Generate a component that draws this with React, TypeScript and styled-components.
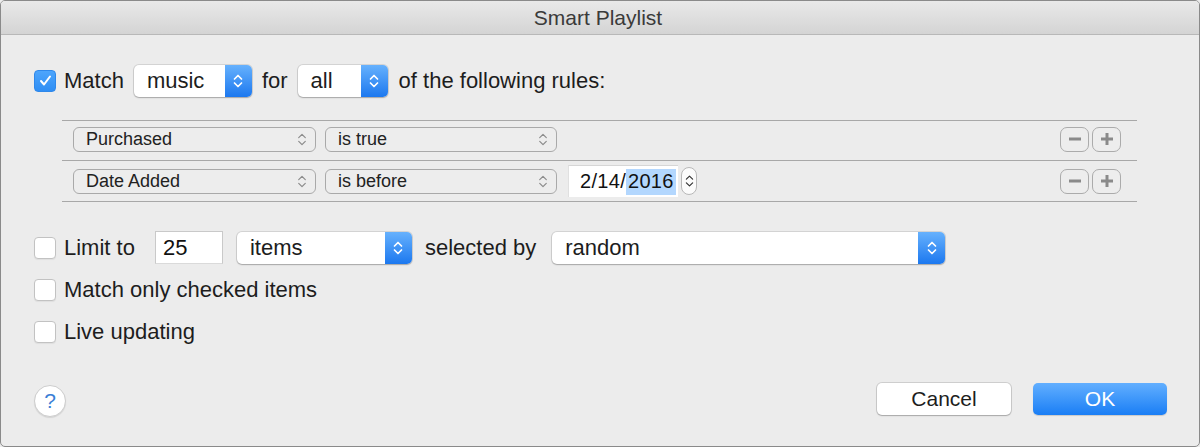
import React from "react";
import styled, { createGlobalStyle } from "styled-components";

const GlobalStyle = createGlobalStyle`
  html, body { margin: 0; padding: 0; background: #ececec; }
  body { font-family: "Liberation Sans", Arial, sans-serif; }
`;

const Window = styled.div`
  width: 1200px;
  height: 447px;
  box-sizing: border-box;
  border: 1px solid #8a8a8a;
  border-radius: 5px;
  background: #ececec;
  display: flex;
  flex-direction: column;
  overflow: hidden;
  color: #1d1d1d;
  font-family: "Liberation Sans", Arial, sans-serif;
`;

const TitleBar = styled.div`
  height: 34px;
  flex: none;
  box-sizing: border-box;
  display: flex;
  align-items: center;
  justify-content: center;
  background: linear-gradient(#e9e9e9, #d4d4d4);
  border-bottom: 1px solid #b8b8b8;
  font-size: 21px;
  color: #3a3a3a;
  padding-right: 4px;
`;

const Content = styled.div`
  flex: 1;
  display: flex;
  flex-direction: column;
  padding: 29px 32px 0 32px;
`;

const Row = styled.div<{ $gap?: number; $mt?: number }>`
  display: flex;
  align-items: center;
  height: 33px;
  gap: ${(p) => p.$gap ?? 10}px;
  margin-top: ${(p) => p.$mt ?? 0}px;
  font-size: 22px;
  white-space: nowrap;
`;

const CheckLabel = styled.label<{ $ml?: number }>`
  display: flex;
  align-items: center;
  gap: 8px;
  margin-left: ${(p) => p.$ml ?? 0}px;
`;

const Check = styled.span<{ $checked?: boolean }>`
  width: 22px;
  height: 22px;
  box-sizing: border-box;
  border-radius: 4px;
  flex: none;
  display: flex;
  align-items: center;
  justify-content: center;
  background: ${(p) => (p.$checked ? "linear-gradient(#4da5fc, #2f8ef4)" : "#fff")};
  border: 1px solid ${(p) => (p.$checked ? "#2f88ea" : "#c2c2c2")};
  box-shadow: ${(p) => (p.$checked ? "none" : "0 1px 1px rgba(0,0,0,0.06)")};
`;

const Text = styled.span<{ $ml?: number }>`
  margin-left: ${(p) => p.$ml ?? 0}px;
`;

const Popup = styled.div<{ $w: number; $ml?: number }>`
  width: ${(p) => p.$w}px;
  height: 32px;
  margin-left: ${(p) => p.$ml ?? 0}px;
  flex: none;
  box-sizing: border-box;
  display: flex;
  align-items: stretch;
  background: #fff;
  border-radius: 5px;
  box-shadow: 0 0 0 1px rgba(0, 0, 0, 0.1), 0 1px 1.5px rgba(0, 0, 0, 0.22);
  overflow: hidden;
  font-size: 22px;
`;

const PopupLabel = styled.span`
  flex: 1;
  display: flex;
  align-items: center;
  padding-left: 13px;
`;

const PopupArrow = styled.span`
  width: 27px;
  flex: none;
  background: linear-gradient(#66b1fd, #1c78ef);
  display: flex;
  align-items: center;
  justify-content: center;
`;

const RulesBox = styled.div`
  margin: 23px 0 0 29px;
  width: 1075px;
  border-top: 1px solid #a8a8a8;
`;

const RuleRow = styled.div<{ $h: number; $pb?: number }>`
  height: ${(p) => p.$h}px;
  box-sizing: border-box;
  display: flex;
  align-items: center;
  padding: 0 16px ${(p) => p.$pb ?? 0}px 11px;
  border-bottom: 1px solid #a8a8a8;
  font-size: 18px;
`;

const RulePopup = styled.div<{ $w: number; $ml?: number }>`
  width: ${(p) => p.$w}px;
  height: 25px;
  margin-left: ${(p) => p.$ml ?? 0}px;
  box-sizing: border-box;
  border: 1px solid #a9a9a9;
  border-radius: 6px;
  display: flex;
  align-items: center;
  justify-content: space-between;
  padding: 0 8px 0 12px;
  background: #ededed;
  color: #222;
`;

const DateField = styled.div`
  width: 110px;
  height: 32px;
  margin-left: 11px;
  box-sizing: border-box;
  background: #fff;
  border-top: 1px solid #d6d6d6;
  border-left: 1px solid #e0e0e0;
  display: flex;
  align-items: center;
  padding-left: 11px;
  font-size: 20px;
  color: #111;
  letter-spacing: 0.3px;
`;

const Selected = styled.span`
  background: #b3d7fe;
  padding: 1px 2px 2px 2px;
`;

const Stepper = styled.div`
  width: 16px;
  height: 28px;
  margin-left: 3px;
  box-sizing: border-box;
  border: 1px solid #b8b8b8;
  border-radius: 8px;
  background: #fbfbfb;
  display: flex;
  align-items: center;
  justify-content: center;
`;

const BtnGroup = styled.div`
  margin-left: auto;
  display: flex;
  gap: 3px;
`;

const SmallBtn = styled.div`
  width: 29px;
  height: 25px;
  box-sizing: border-box;
  border: 1.5px solid #ababab;
  border-radius: 7px;
  background: #ededed;
  display: flex;
  align-items: center;
  justify-content: center;
`;

const TextInput = styled.div`
  width: 68px;
  height: 33px;
  margin-left: 20px;
  box-sizing: border-box;
  background: #fff;
  border: 1px solid #c9c9c9;
  border-bottom-color: #dadada;
  display: flex;
  align-items: center;
  padding-left: 7px;
  font-size: 22px;
  color: #111;
`;

const Footer = styled.div`
  display: flex;
  align-items: flex-start;
  margin-top: 35px;
`;

const HelpBtn = styled.div`
  width: 32px;
  height: 32px;
  margin-left: 1px;
  margin-top: 2px;
  box-sizing: border-box;
  border-radius: 50%;
  background: #fff;
  border: 1px solid #cdcdcd;
  box-shadow: 0 1px 1px rgba(0, 0, 0, 0.1);
  display: flex;
  align-items: center;
  justify-content: center;
  color: #3b7fd6;
  font-size: 21px;
`;

const Button = styled.div<{ $primary?: boolean; $ml?: number }>`
  width: 134px;
  height: 32px;
  margin-left: ${(p) => p.$ml ?? 0}px;
  box-sizing: border-box;
  border-radius: 5px;
  display: flex;
  align-items: center;
  justify-content: center;
  font-size: 21px;
  color: ${(p) => (p.$primary ? "#fff" : "#1d1d1d")};
  background: ${(p) => (p.$primary ? "linear-gradient(#62afff, #1a7ef5)" : "#fff")};
  box-shadow: ${(p) =>
    p.$primary
      ? "0 1px 1px rgba(0,0,0,0.15)"
      : "0 0 0 1px rgba(0,0,0,0.12), 0 1px 1.5px rgba(0,0,0,0.2)"};
`;

const Spacer = styled.div`
  flex: 1;
`;

const UpDown = ({ color, w = 10, h = 16, sw = 1.7 }: { color: string; w?: number; h?: number; sw?: number }) => (
  <svg width={w} height={h} viewBox="0 0 10 16" fill="none" stroke={color} strokeWidth={sw} strokeLinecap="round" strokeLinejoin="round">
    <path d="M1.5 6 L5 2.5 L8.5 6" />
    <path d="M1.5 10 L5 13.5 L8.5 10" />
  </svg>
);

const CheckMark = () => (
  <svg width="15" height="15" viewBox="0 0 15 15" fill="none" stroke="#fff" strokeWidth="2" strokeLinecap="round" strokeLinejoin="round">
    <path d="M3 8 L6 11.5 L12 3.5" />
  </svg>
);

const Minus = () => (
  <svg width="14" height="14" viewBox="0 0 14 14" stroke="#8a8a8a" strokeWidth="3">
    <path d="M1 7 H13" />
  </svg>
);

const Plus = () => (
  <svg width="14" height="14" viewBox="0 0 14 14" stroke="#8a8a8a" strokeWidth="3">
    <path d="M1 7 H13 M7 1 V13" />
  </svg>
);

const BluePopup = ({ label, w, ml }: { label: string; w: number; ml?: number }) => (
  <Popup $w={w} $ml={ml}>
    <PopupLabel>{label}</PopupLabel>
    <PopupArrow>
      <UpDown color="#fff" />
    </PopupArrow>
  </Popup>
);

const GrayPopup = ({ label, w, ml }: { label: string; w: number; ml?: number }) => (
  <RulePopup $w={w} $ml={ml}>
    <span>{label}</span>
    <UpDown color="#8c8c8c" w={10} h={15} sw={1.3} />
  </RulePopup>
);

const RuleButtons = () => (
  <BtnGroup>
    <SmallBtn>
      <Minus />
    </SmallBtn>
    <SmallBtn>
      <Plus />
    </SmallBtn>
  </BtnGroup>
);

export default function App() {
  return (
    <>
      <GlobalStyle />
      <Window>
        <TitleBar>Smart Playlist</TitleBar>
        <Content>
          <Row $gap={10}>
            <CheckLabel $ml={1}>
              <Check $checked>
                <CheckMark />
              </Check>
              <span>Match</span>
            </CheckLabel>
            <BluePopup label="music" w={118} />
            <span>for</span>
            <BluePopup label="all" w={90} />
            <Text $ml={1}>of the following rules:</Text>
          </Row>

          <RulesBox>
            <RuleRow $h={40} $pb={3}>
              <GrayPopup label="Purchased" w={243} />
              <GrayPopup label="is true" w={232} ml={9} />
              <RuleButtons />
            </RuleRow>
            <RuleRow $h={41}>
              <GrayPopup label="Date Added" w={243} />
              <GrayPopup label="is before" w={232} ml={9} />
              <DateField>
                2/14/<Selected>2016</Selected>
              </DateField>
              <Stepper>
                <UpDown color="#333" w={9} h={16} sw={1.3} />
              </Stepper>
              <RuleButtons />
            </RuleRow>
          </RulesBox>

          <Row $gap={0} $mt={29}>
            <CheckLabel $ml={1}>
              <Check />
              <span>Limit to</span>
            </CheckLabel>
            <TextInput>25</TextInput>
            <BluePopup label="items" w={175} ml={14} />
            <Text $ml={13}>selected by</Text>
            <BluePopup label="random" w={393} ml={16} />
          </Row>
          <Row $mt={9}>
            <CheckLabel $ml={1}>
              <Check />
              <span>Match only checked items</span>
            </CheckLabel>
          </Row>
          <Row $mt={9}>
            <CheckLabel $ml={1}>
              <Check />
              <span>Live updating</span>
            </CheckLabel>
          </Row>

          <Footer>
            <HelpBtn>?</HelpBtn>
            <Spacer />
            <Button>Cancel</Button>
            <Button $primary $ml={22}>
              OK
            </Button>
          </Footer>
        </Content>
      </Window>
    </>
  );
}
